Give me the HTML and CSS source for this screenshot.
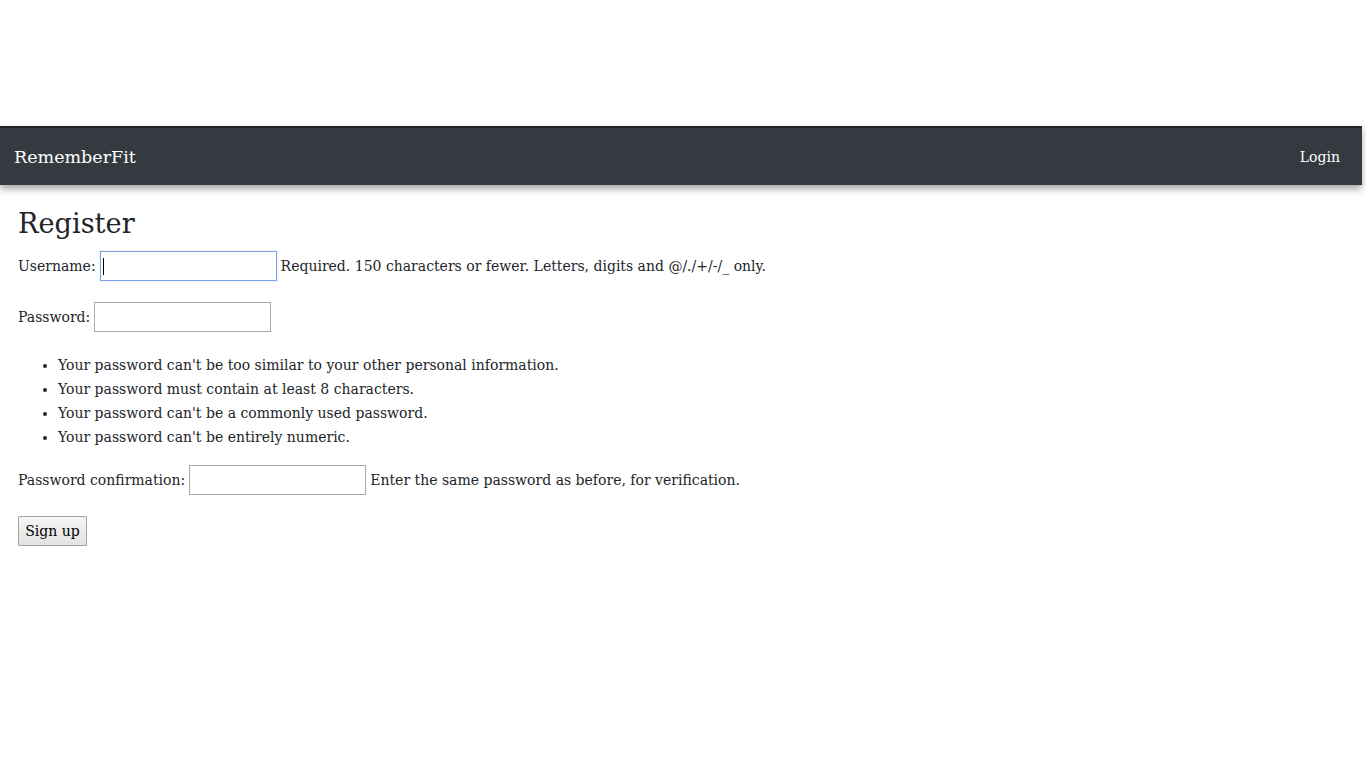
FILE: index.html
```html
<!DOCTYPE html>
<html lang="en">
<head>
<meta charset="utf-8">
<title>RememberFit - Register</title>
<link rel="stylesheet" href="styles.css">
</head>
<body>
<nav class="navbar">
  <a class="brand" href="#">RememberFit</a>
  <a class="nav-link" href="#">Login</a>
</nav>
<main class="content">
  <h1 class="title">Register</h1>
  <form class="form">
    <p class="row row-first">
      <label class="label" for="u">Username:</label>
      <span class="field">
        <input class="input input-focus" id="u" type="text">
        <span class="caret"></span>
      </span>
      <span class="help">Required. 150 characters or fewer. Letters, digits and @/./+/-/_ only.</span>
    </p>
    <p class="row">
      <label class="label" for="p1">Password:</label>
      <span class="field"><input class="input" id="p1" type="password"></span>
    </p>
    <ul class="rules">
      <li>Your password can't be too similar to your other personal information.</li>
      <li>Your password must contain at least 8 characters.</li>
      <li>Your password can't be a commonly used password.</li>
      <li>Your password can't be entirely numeric.</li>
    </ul>
    <p class="row row-confirm">
      <label class="label" for="p2">Password confirmation:</label>
      <span class="field"><input class="input" id="p2" type="password"></span>
      <span class="help">Enter the same password as before, for verification.</span>
    </p>
    <button class="btn" type="button">Sign up</button>
  </form>
</main>
</body>
</html>
```

FILE: styles.css
```css
html, body {
  margin: 0;
  padding: 0;
  background: #ffffff;
}
body {
  font-family: "DejaVu Serif", "Liberation Serif", serif;
  font-size: 14px;
  color: #212529;
}
.navbar {
  margin-top: 126px;
  margin-right: 4px;
  height: 57px;
  border-top: 2px solid #222427;
  background: #343a40;
  box-shadow: 0 4px 7px rgba(0, 0, 0, 0.35);
  display: flex;
  align-items: center;
  justify-content: space-between;
  padding: 0 22px 0 14px;
}
.brand {
  color: #ffffff;
  text-decoration: none;
  font-size: 17.5px;
}
.nav-link {
  color: #ffffff;
  text-decoration: none;
  font-size: 14px;
}
.content {
  padding: 0 18px;
}
.title {
  margin: 19px 0 7px;
  font-weight: normal;
  font-size: 27.2px;
  line-height: 40px;
}
.form {
  margin: 0;
}
.row {
  margin: 0 0 21px;
  height: 30px;
  display: flex;
  align-items: center;
  white-space: nowrap;
}
.label {
  margin-right: 4px;
}
.field {
  position: relative;
  display: flex;
  margin-right: 4px;
}
.input {
  box-sizing: border-box;
  width: 177px;
  height: 30px;
  margin: 0;
  border: 1px solid #a9a9a9;
  background: #ffffff;
  padding: 2px 4px;
  font: inherit;
  outline: none;
}
.input-focus {
  border-color: #7aa3e6;
  box-shadow: 0 0 1px #a9c4f0;
}
.caret {
  position: absolute;
  left: 3px;
  top: 7px;
  width: 1px;
  height: 17px;
  background: #000000;
}
.rules {
  margin: 20px 0 16px;
  padding-left: 40px;
  line-height: 24px;
}
.row-confirm {
  margin-bottom: 21px;
}
.btn {
  box-sizing: border-box;
  width: 69px;
  height: 30px;
  padding: 0;
  font: inherit;
  color: #000000;
  border: 1px solid #a3a3a3;
  border-radius: 1px;
  background: linear-gradient(#f5f5f5, #e2e2e2);
}
```
